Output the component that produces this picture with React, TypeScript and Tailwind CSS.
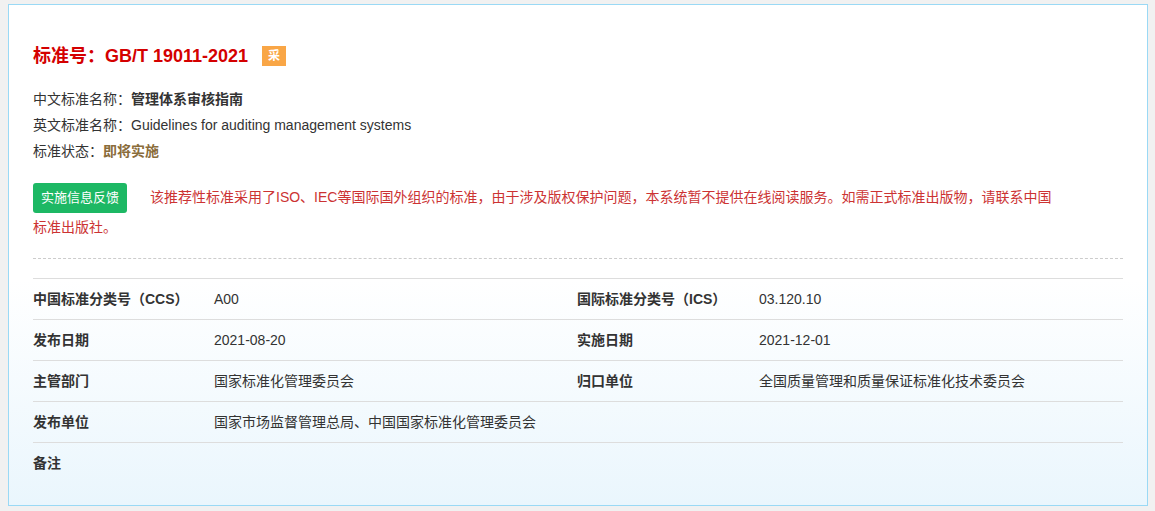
import React from 'react';

const font = { fontFamily: '"Liberation Sans", Arial, "Noto Sans CJK SC", sans-serif' };

interface Row {
  label: string;
  value: string;
  label2?: string;
  value2?: string;
}

const rows: Row[] = [
  { label: '中国标准分类号（CCS）', value: 'A00', label2: '国际标准分类号（ICS）', value2: '03.120.10' },
  { label: '发布日期', value: '2021-08-20', label2: '实施日期', value2: '2021-12-01' },
  { label: '主管部门', value: '国家标准化管理委员会', label2: '归口单位', value2: '全国质量管理和质量保证标准化技术委员会' },
  { label: '发布单位', value: '国家市场监督管理总局、中国国家标准化管理委员会' },
  { label: '备注', value: '' },
];

export default function App() {
  return (
    <div className="min-h-screen bg-[#f1f1f1] pt-1 pl-2" style={font}>
      <div className="w-[1140px] h-[502px] border border-[#9ad9f5] bg-[linear-gradient(to_bottom,#ffffff_55%,#eaf6fd_100%)] px-6 pt-[39px] text-[14px] text-[#333]">
        {/* Title */}
        <h1 className="flex items-center h-6 text-[18px] font-bold text-[#d40000] leading-6">
          <span>标准号：GB/T 19011-2021</span>
          <span className="ml-[14px] inline-flex items-center justify-center w-6 h-5 bg-[#f9a646] text-white text-[12px] font-bold">采</span>
        </h1>

        {/* Basic info */}
        <div className="mt-[18px] leading-[26px]">
          <div>
            中文标准名称：<span className="font-bold">管理体系审核指南</span>
          </div>
          <div>英文标准名称：Guidelines for auditing management systems</div>
          <div>
            标准状态：<span className="font-bold text-[#8a6d3b]">即将实施</span>
          </div>
        </div>

        {/* Notice */}
        <div className="mt-[19px] w-[1030px] leading-[28px] text-[#cc3333]">
          <button className="inline-flex items-center justify-center w-[94px] h-[30px] mr-[23px] rounded-[3px] bg-[#1db864] text-white text-[13px] align-middle whitespace-nowrap">
            实施信息反馈
          </button>
          该推荐性标准采用了ISO、IEC等国际国外组织的标准，由于涉及版权保护问题，本系统暂不提供在线阅读服务。如需正式标准出版物，请联系中国标准出版社。
        </div>

        <div className="mt-[17px] border-t border-dashed border-[#cccccc]" />

        {/* Detail table */}
        <div className="mt-[19px] border-t border-[#dddddd]">
          {rows.map((r, i) => (
            <div
              key={r.label}
              className={`grid grid-cols-[181px_363px_182px_1fr] h-[41px] items-center ${
                i < rows.length - 1 ? 'border-b border-[#dddddd]' : ''
              }`}
            >
              <div className="font-bold">{r.label}</div>
              <div>{r.value}</div>
              <div className="font-bold">{r.label2}</div>
              <div>{r.value2}</div>
            </div>
          ))}
        </div>
      </div>
    </div>
  );
}
